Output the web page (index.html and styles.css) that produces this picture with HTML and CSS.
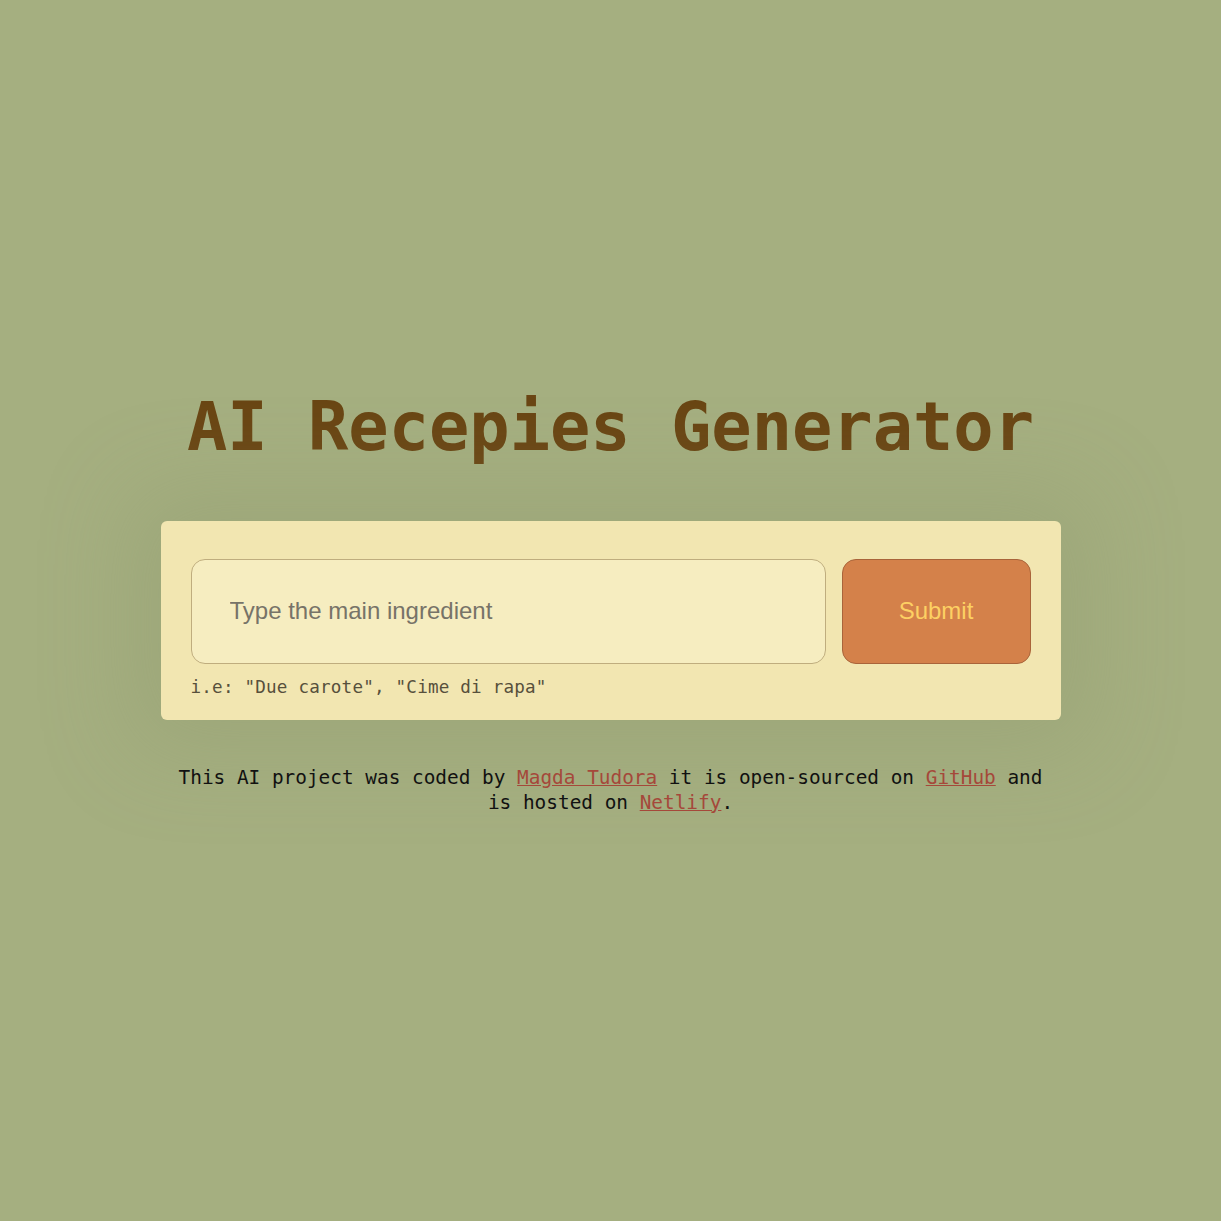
FILE: index.html
```html
<!DOCTYPE html>
<html lang="en">
<head>
<meta charset="utf-8">
<title>AI Recepies Generator</title>
<link rel="stylesheet" href="styles.css">
</head>
<body>
<main class="container">
  <h1 class="title">AI Recepies Generator</h1>
  <form class="card">
    <div class="row">
      <input class="ingredient" type="text" placeholder="Type the main ingredient">
      <button class="submit" type="button">Submit</button>
    </div>
    <div class="hint">i.e: "Due carote", "Cime di rapa"</div>
  </form>
  <footer class="credits">
    This AI project was coded by <a href="#">Magda Tudora</a> it is open-sourced on <a href="#">GitHub</a> and is hosted on <a href="#">Netlify</a>.
  </footer>
</main>
</body>
</html>
```
FILE: styles.css
```css
html, body {
  margin: 0;
  padding: 0;
}
body {
  background: #a5af80;
  min-height: 100vh;
  display: flex;
  align-items: center;
  justify-content: center;
  font-family: "DejaVu Sans Mono", "Liberation Mono", monospace;
}
.container {
  width: 900px;
  display: flex;
  flex-direction: column;
  align-items: stretch;
  margin-top: -20px;
}
.title {
  margin: 0 0 54px;
  text-align: center;
  font-size: 67px;
  line-height: 80px;
  font-weight: bold;
  color: #6a4614;
  white-space: nowrap;
}
.card {
  background: #f2e6b1;
  border-radius: 6px;
  padding: 38px 30px 22px;
  box-shadow: 0 0 90px 30px rgba(140, 150, 105, 0.3);
}
.row {
  display: flex;
  gap: 16px;
}
.ingredient {
  flex: 1;
  height: 105px;
  box-sizing: border-box;
  border: 1.5px solid #bfad7e;
  border-radius: 14px;
  background: #f6edc0;
  padding: 0 38px;
  font-family: "Liberation Sans", Arial, sans-serif;
  font-size: 24px;
  color: #333;
  outline: none;
}
.ingredient::placeholder {
  color: #777368;
}
.submit {
  width: 189px;
  height: 105px;
  box-sizing: border-box;
  border: 1.5px solid #a9643a;
  border-radius: 14px;
  background: #d4814a;
  color: #fdd063;
  font-family: "Liberation Sans", Arial, sans-serif;
  font-size: 24px;
  cursor: pointer;
}
.hint {
  margin-top: 12px;
  font-size: 17.6px;
  line-height: 22px;
  color: #57503c;
  letter-spacing: 0.2px;
}
.credits {
  margin-top: 45px;
  text-align: center;
  font-size: 19.4px;
  line-height: 25px;
  color: #111;
  padding: 0 12px;
}
.credits a {
  color: #a5483a;
  text-decoration: underline;
}
```
